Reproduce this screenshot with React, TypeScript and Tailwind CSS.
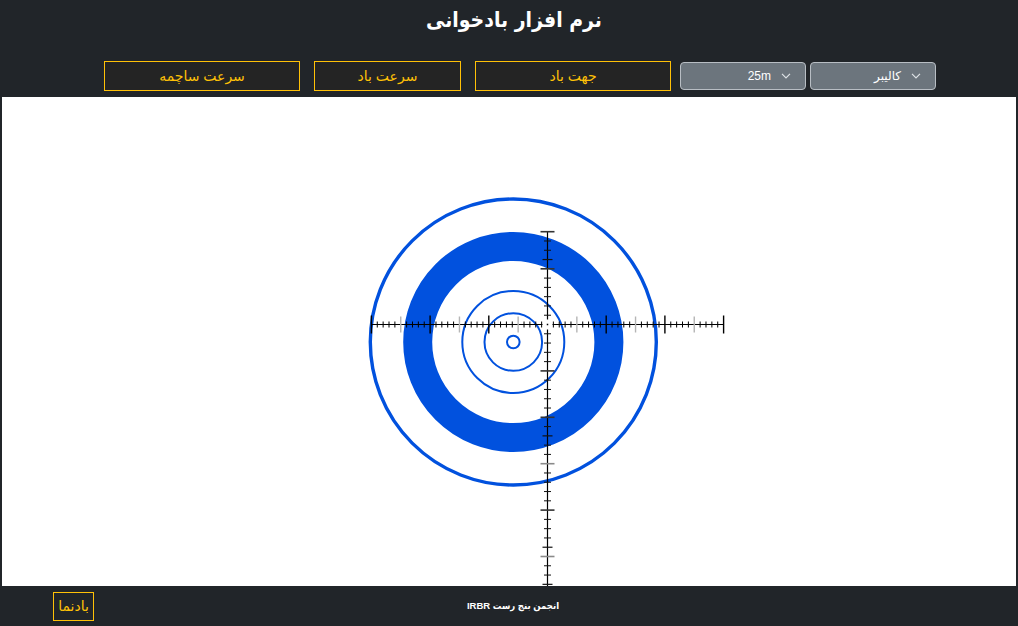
import React from "react";

const BLUE = "#0151de";

function Chevron() {
  return (
    <svg width="10" height="6" viewBox="0 0 10 6" className="block shrink-0">
      <polyline points="1,0.8 5,4.8 9,0.8" fill="none" stroke="#dee2e6" strokeWidth="1.2" />
    </svg>
  );
}

function SelectBox({ label, extra }: { label: string; extra: string }) {
  return (
    <div
      className={`w-[126px] h-[28px] shrink-0 rounded-[4px] border border-[#b8bec4] bg-[#6c757d] flex items-center gap-[10px] pr-[14px] text-white text-[12px] ${extra}`}
    >
      <Chevron />
      <span className="leading-none">{label}</span>
    </div>
  );
}

function AmberBtn({ label, extra }: { label: string; extra: string }) {
  return (
    <div
      className={`h-[30px] shrink-0 border border-[#ffc107] bg-[#242424] flex items-center justify-center text-[#ffc107] text-[14px] ${extra}`}
    >
      {label}
    </div>
  );
}

function Target() {
  const cx = 511.3;
  const cy = 245;
  const rx = 545.5;
  const ry = 227.5;
  const hs = 5.87;
  const vs = 9.28;

  const hTicks: React.ReactNode[] = [];
  for (let k = -30; k <= 30; k++) {
    if (k === 0) continue;
    const x = rx + hs * k;
    const a = Math.abs(k);
    if (a % 10 === 0) {
      hTicks.push(<line key={"h" + k} x1={x} x2={x} y1={ry - 9} y2={ry + 9} stroke="#000" strokeWidth={1.4} />);
    } else if (a % 10 === 5) {
      hTicks.push(<line key={"h" + k} x1={x} x2={x} y1={ry - 8} y2={ry + 8} stroke="#b5b5b5" strokeWidth={1.4} />);
    } else {
      hTicks.push(<line key={"h" + k} x1={x} x2={x} y1={ry - 3} y2={ry + 3} stroke="#000" strokeWidth={1} />);
    }
  }

  const vTicks: React.ReactNode[] = [];
  for (let k = -10; k <= 29; k++) {
    if (k === 0) continue;
    const y = ry + vs * k;
    const a = Math.abs(k);
    if (a % 10 === 0 || k === 5 || k === -6) {
      vTicks.push(<line key={"v" + k} x1={rx - 7} x2={rx + 7} y1={y} y2={y} stroke="#333" strokeWidth={1.6} />);
    } else if (a % 5 === 0 && k !== -5) {
      vTicks.push(<line key={"v" + k} x1={rx - 7} x2={rx + 7} y1={y} y2={y} stroke="#8a8a8a" strokeWidth={1.6} />);
    } else if (k === 12 || k === 24 || k === 28 || k === -7) {
      vTicks.push(<line key={"v" + k} x1={rx - 5} x2={rx + 5} y1={y} y2={y} stroke="#111" strokeWidth={1.2} />);
    } else {
      vTicks.push(<line key={"v" + k} x1={rx - 3.5} x2={rx + 3.5} y1={y} y2={y} stroke="#111" strokeWidth={1} />);
    }
  }

  return (
    <svg width="1014" height="489" viewBox="0 0 1014 489" className="block">
      <circle cx={cx} cy={cy} r={143} fill="none" stroke={BLUE} strokeWidth={3.4} />
      <circle cx={cx} cy={cy} r={95.6} fill="none" stroke={BLUE} strokeWidth={29} />
      <circle cx={cx} cy={cy} r={51} fill="none" stroke={BLUE} strokeWidth={2} />
      <circle cx={cx} cy={cy} r={28.8} fill="none" stroke={BLUE} strokeWidth={2} />
      <circle cx={cx} cy={cy} r={6.3} fill="none" stroke={BLUE} strokeWidth={2} />

      <line x1={369.4} x2={rx - 5} y1={ry} y2={ry} stroke="#000" strokeWidth={1.2} />
      <line x1={rx + 5} x2={721.6} y1={ry} y2={ry} stroke="#000" strokeWidth={1.2} />
      <line x1={rx} x2={rx} y1={134.5} y2={ry - 5} stroke="#000" strokeWidth={1.2} />
      <line x1={rx} x2={rx} y1={ry + 5} y2={489} stroke="#000" strokeWidth={1.2} />
      <rect x={rx - 0.75} y={ry - 0.75} width={1.5} height={1.5} fill="#000" />
      {hTicks}
      {vTicks}
    </svg>
  );
}

export default function App() {
  return (
    <div
      dir="rtl"
      className="w-[1018px] h-[626px] bg-[#212529] flex flex-col overflow-hidden font-['Liberation_Sans','DejaVu_Sans',sans-serif]"
    >
      <div className="h-[97px] shrink-0 flex flex-col">
        <h1 className="h-[40px] pt-[4px] pl-[10px] text-center text-white font-bold text-[21px] leading-[32px] font-['DejaVu_Sans',sans-serif] [font-stretch:condensed]">
          نرم افزار بادخوانی
        </h1>
        <div className="mt-[21px] h-[30px] flex items-center pr-[82px]">
          <SelectBox label="کالیبر" extra="" />
          <SelectBox label="25m" extra="mr-[4px]" />
          <AmberBtn label="جهت باد" extra="w-[196px] mr-[9px]" />
          <AmberBtn label="سرعت باد" extra="w-[147px] mr-[14px]" />
          <AmberBtn label="سرعت ساچمه" extra="w-[196px] mr-[14px]" />
        </div>
      </div>

      <div className="mx-[2px] h-[489px] shrink-0 bg-white overflow-hidden">
        <Target />
      </div>

      <div className="h-[40px] shrink-0 grid grid-cols-[1fr_auto_1fr] items-center">
        <div />
        <div className="pl-[8px] text-white font-bold text-[9.5px] [font-stretch:condensed]">انجمن بنج رست IRBR</div>
        <div className="flex justify-end pl-[53px]">
          <div className="h-[29px] w-[41px] border border-[#ffc107] flex items-center justify-center text-[#ffc107] text-[14px]">
            بادنما
          </div>
        </div>
      </div>
    </div>
  );
}
